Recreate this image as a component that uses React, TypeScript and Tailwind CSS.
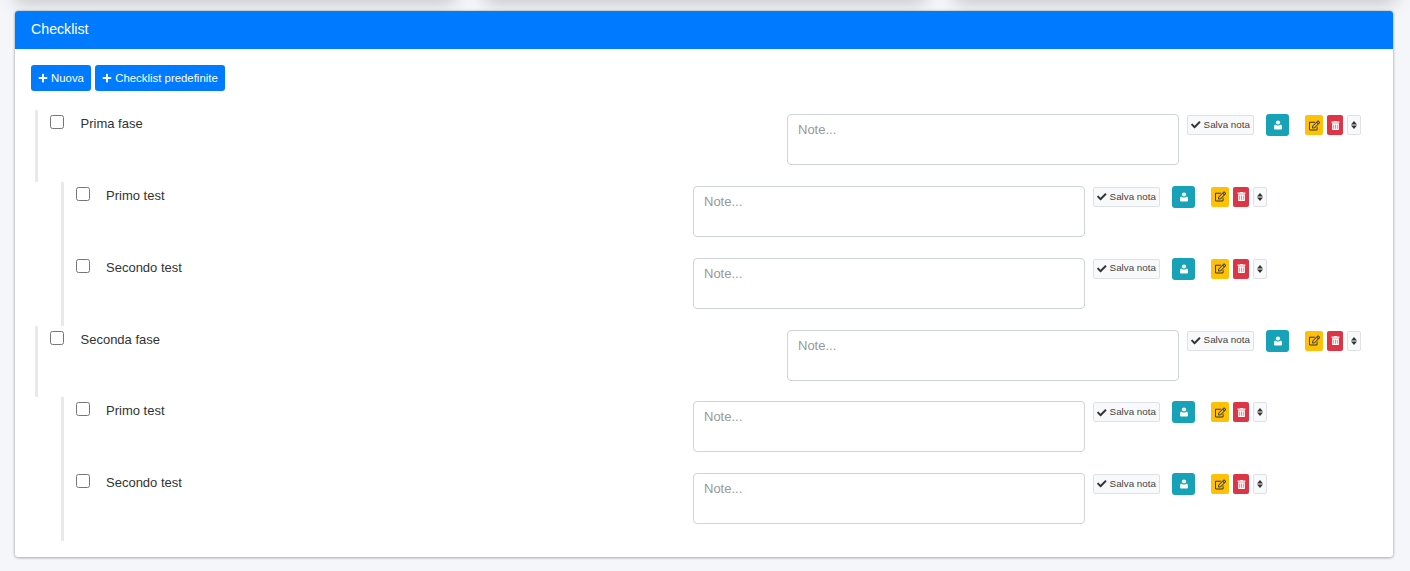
import { FaCheck, FaPlus, FaRegEdit, FaTrashAlt } from "react-icons/fa";

type Step = {
  label: string;
  nested?: boolean;
};

const steps: Step[] = [
  { label: "Prima fase" },
  { label: "Primo test", nested: true },
  { label: "Secondo test", nested: true },
  { label: "Seconda fase" },
  { label: "Primo test", nested: true },
  { label: "Secondo test", nested: true },
];

function UserIcon() {
  return (
    <svg width="8" height="10" viewBox="0 0 8 10" fill="currentColor">
      <circle cx="4" cy="2.5" r="2.1" />
      <path d="M1.3 4.6c.6.7 1.6 1 2.7 1s2.1-.3 2.7-1c.9.3 1.3 1.2 1.3 2.7v1c0 .8-.6 1.2-1.2 1.2H1.2C.6 9.5 0 9.1 0 8.3v-1c0-1.5.4-2.4 1.3-2.7z" />
    </svg>
  );
}

function SortIcon() {
  return (
    <svg width="6" height="8" viewBox="0 0 6 8" fill="currentColor">
      <path d="M3 0 6 3.4H0zM0 4.6h6L3 8z" />
    </svg>
  );
}

function Row({ label, nested }: Step) {
  return (
    <div
      className={`flex h-[71.8px] border-l-[3px] border-[#e9e9e9] pl-3 ${
        nested ? "ml-[30px] mr-[110px]" : "ml-[4px] mr-[16px]"
      }`}
    >
      <input type="checkbox" className="mt-[5px] h-[14px] w-[14px] shrink-0" />
      <span className={`mt-[6px] flex-1 text-[13px] leading-[16px] text-[#333] ${nested ? "ml-[16px]" : "ml-[16.5px]"}`}>
        {label}
      </span>
      <textarea
        placeholder="Note..."
        className="mt-[4px] h-[51px] w-[392px] resize-none rounded-[4px] border border-[#ced4da] bg-white px-[10px] py-[7px] text-[13px] leading-[16px] placeholder:text-[#999]"
      />
      <button className="ml-2 mt-[5px] flex h-[20px] w-[67px] items-center justify-center gap-[3px] rounded-[2px] border border-[#dee2e6] bg-[#f8f9fa] text-[9.8px] text-[#444]">
        <FaCheck className="text-[9.5px] text-[#333]" />
        Salva nota
      </button>
      <button className="ml-3 mt-[4px] flex h-[22px] w-[23px] items-center justify-center rounded-[3px] bg-[#17a2b8] text-white">
        <UserIcon />
      </button>
      <button className="ml-4 mt-[5px] flex h-[20px] w-[18px] items-center justify-center rounded-[2px] bg-[#ffc107] text-[#333]">
        <FaRegEdit className="text-[11px]" />
      </button>
      <button className="ml-1 mt-[5px] flex h-[20px] w-[16px] items-center justify-center rounded-[2px] bg-[#dc3545] text-white">
        <FaTrashAlt className="text-[9px]" />
      </button>
      <button className="ml-1 mt-[5px] flex h-[20px] w-[14px] items-center justify-center rounded-[2px] border border-[#dee2e6] bg-[#f8f9fa] text-[#333]">
        <SortIcon />
      </button>
    </div>
  );
}

export default function App() {
  return (
    <div className="min-h-screen overflow-hidden bg-[#f4f6f9] font-['Liberation_Sans',Arial,sans-serif]">
      <div className="-mt-[10px] flex h-[10px] gap-[30px] px-[15px]">
        <div className="flex-1 bg-white shadow-[0_0_18px_rgba(0,0,0,0.35)]" />
        <div className="flex-1 bg-white shadow-[0_0_18px_rgba(0,0,0,0.35)]" />
        <div className="flex-1 bg-white shadow-[0_0_18px_rgba(0,0,0,0.35)]" />
      </div>
      <section className="relative ml-[15px] mr-[17px] mt-[11px] h-[546px] rounded-[3px] bg-white shadow-[0_0_3px_rgba(0,0,0,0.25),0_1px_3px_rgba(0,0,0,0.2)]">
        <header className="flex h-[38px] items-center rounded-t-[3px] bg-[#007bff] pl-4 text-[14.2px] text-white">
          Checklist
        </header>
        <div className="p-4">
          <div className="flex gap-1">
            <button className="flex h-[26px] w-[60px] items-center justify-center gap-[3px] rounded-[3px] bg-[#007bff] pt-px text-[11.4px] text-white">
              <FaPlus className="-mt-px text-[10px]" />
              Nuova
            </button>
            <button className="flex h-[26px] w-[130px] items-center justify-center gap-[3px] rounded-[3px] bg-[#007bff] pt-px text-[11.4px] text-white">
              <FaPlus className="-mt-px text-[10px]" />
              Checklist predefinite
            </button>
          </div>
          <div className="mt-[19.2px]">
            {steps.map((step, i) => (
              <Row key={i} {...step} />
            ))}
          </div>
        </div>
      </section>
    </div>
  );
}
